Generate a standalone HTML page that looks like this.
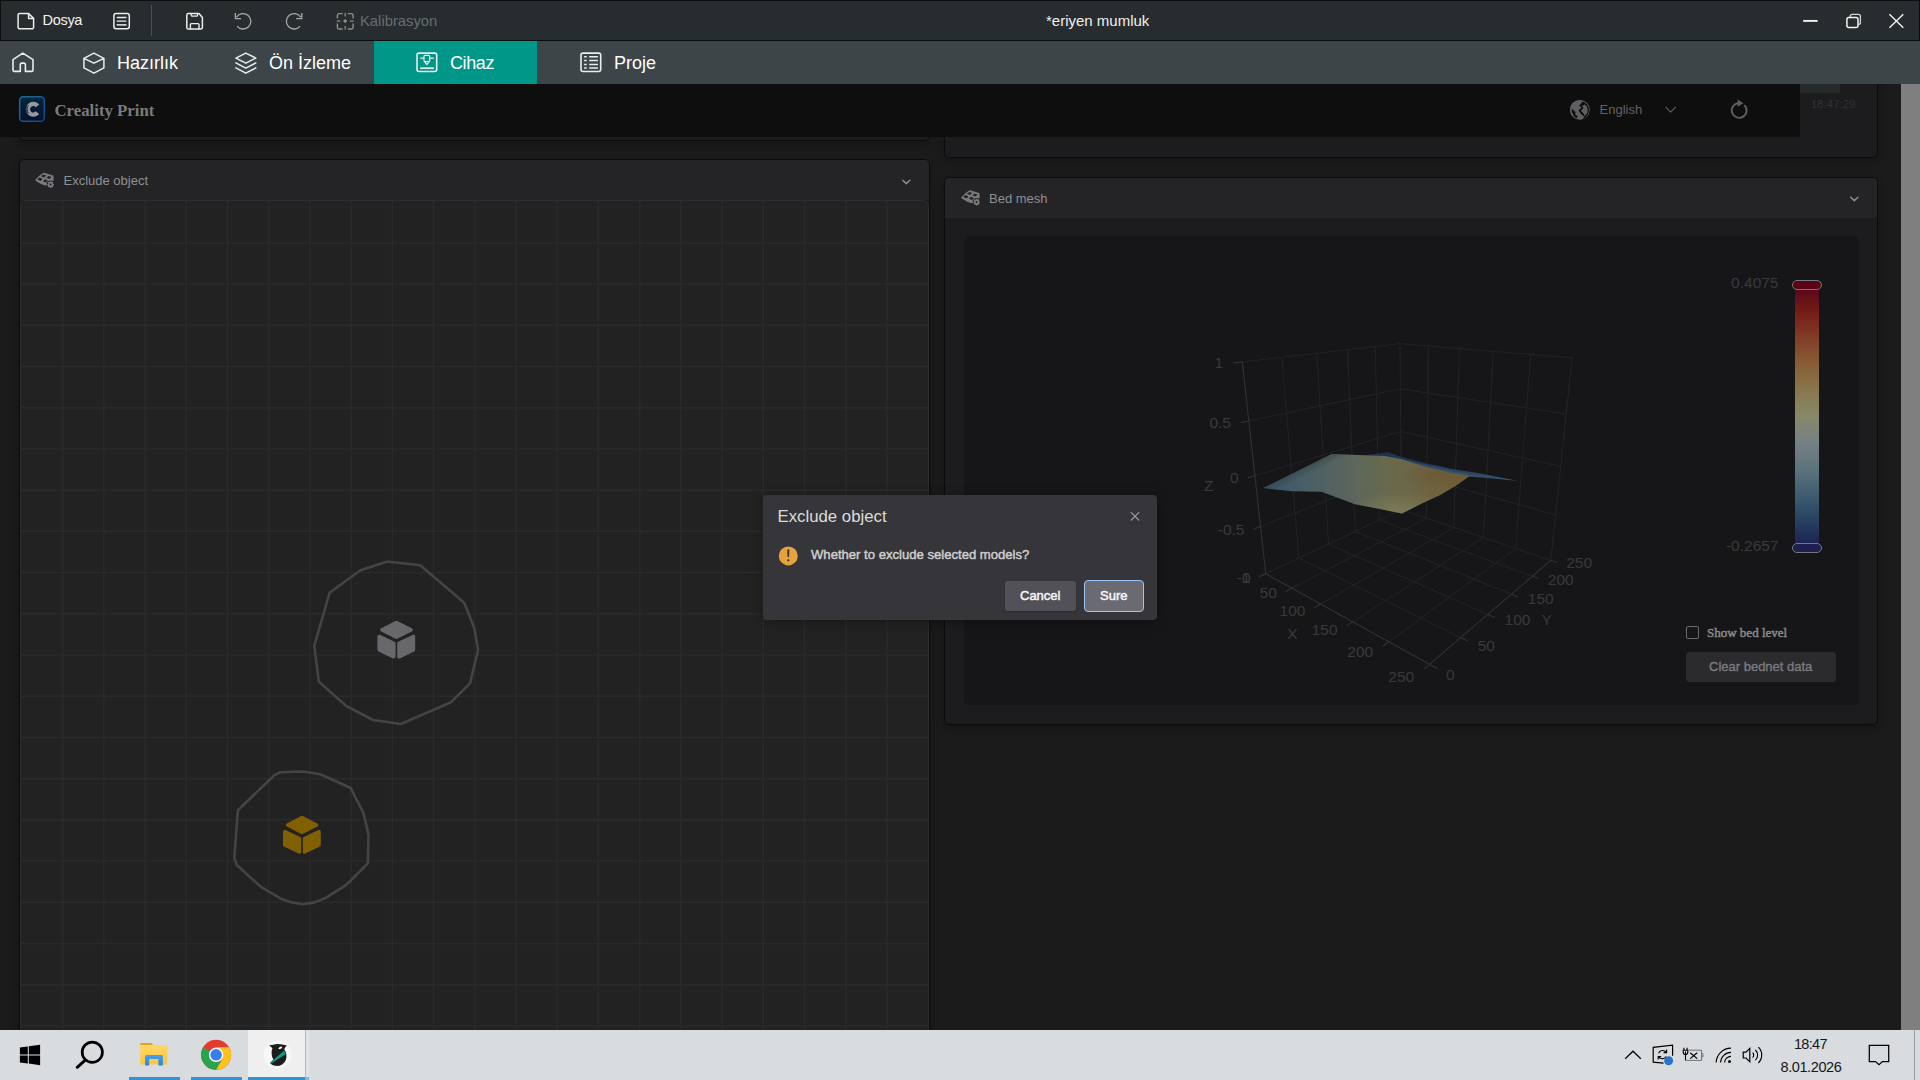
<!DOCTYPE html>
<html lang="tr">
<head>
<meta charset="utf-8">
<title>*eriyen mumluk</title>
<style>
*{box-sizing:border-box;margin:0;padding:0}
html,body{width:1920px;height:1080px;overflow:hidden;background:#1b1b1b}
body{position:relative;font-family:"Liberation Sans",sans-serif;color:#fff}
.abs{position:absolute}
.t{position:absolute;white-space:nowrap;line-height:1}
/* window chrome */
#titlebar{left:0;top:0;width:1920px;height:41px;background:#272d2f;border-top:1px solid #0d1011;border-left:1px solid #0d1011;border-right:1px solid #0b0d0e;border-bottom:1px solid #0b0d0e}
#tabbar{left:0;top:41px;width:1920px;height:43px;background:#3d4548}
#tabsel{left:374px;top:41px;width:163px;height:43px;background:#009688}
/* web content */
#web{left:0;top:84px;width:1901px;height:946px;background:#1b1b1b;overflow:hidden}
#scroll{left:1901px;top:84px;width:19px;height:946px;background:#7f7f80}
#hdr{left:0;top:0;width:1800px;height:53px;background:#0e0e0e}
.panel{position:absolute;background:#1c1c1e;border:1px solid #0c0c0d;border-radius:5px;box-shadow:0 3px 8px rgba(0,0,0,.28)}
.phead{position:absolute;left:0;top:0;right:0;height:40px;background:#242426;border-radius:4px 4px 0 0}
/* taskbar */
#taskbar{left:0;top:1030px;width:1920px;height:50px;background:#d8dcdf}
</style>
</head>
<body>
<div id="titlebar" class="abs"></div>
<div id="tabbar" class="abs"></div>
<div id="tabsel" class="abs"></div>
<!-- title bar text -->
<span class="t" style="left:42.5px;top:13px;font-size:14.5px;letter-spacing:-.3px;color:#f2f2f2">Dosya</span>
<span class="t" style="left:360px;top:13.6px;font-size:14.8px;color:#666d71">Kalibrasyon</span>
<span class="t" style="left:1046px;top:13px;font-size:15px;color:#f0f0f0">*eriyen mumluk</span>
<div class="abs" style="left:151px;top:5px;width:1px;height:31px;background:#4a5053"></div>
<!-- tab text -->
<span class="t" style="left:117px;top:54px;font-size:18px;color:#fff">Hazırlık</span>
<span class="t" style="left:269px;top:54px;font-size:18px;color:#fff">Ön İzleme</span>
<span class="t" style="left:450px;top:54px;font-size:18px;letter-spacing:-.4px;color:#fff">Cihaz</span>
<span class="t" style="left:614px;top:54px;font-size:18px;color:#fff">Proje</span>
<div id="web" class="abs">
  <!-- previous (scrolled) panels -->
  <div class="panel" style="left:19px;top:-30px;width:911px;height:87px"></div>
  <div class="panel" style="left:944px;top:-30px;width:934px;height:104px"></div>
  <div class="abs" style="left:1800px;top:0;width:40px;height:9px;background:#272a2a"></div>
  <span class="t" style="left:1811px;top:15px;font-size:11.4px;color:#313133">18:47:29</span>
  <div id="hdr" class="abs"></div>
  <span class="t" style="left:54.5px;top:19px;font-family:'Liberation Serif',serif;font-weight:bold;font-size:16.8px;color:#7b7b7b">Creality Print</span>
  <span class="t" style="left:1599.5px;top:19px;font-size:13px;color:#626266">English</span>

  <!-- Exclude object panel -->
  <div class="panel" style="left:19px;top:75px;width:911px;height:900px;border-radius:5px 5px 0 0">
    <div class="phead"></div>
    <span class="t" style="left:43.5px;top:14px;font-size:13px;color:#8f8f91">Exclude object</span>
    <svg class="abs" id="grid" style="left:0px;top:40px;background:#222223;border-radius:6px 6px 0 0;border:1px solid #2d2d2f;border-bottom:0" width="909" height="831" viewBox="21 201 907 830"><g stroke="#2a2a2d" stroke-width="1.5"><path d="M62.60,200V1040"/><path d="M103.82,200V1040"/><path d="M145.04,200V1040"/><path d="M186.26,200V1040"/><path d="M227.48,200V1040"/><path d="M268.70,200V1040"/><path d="M309.92,200V1040"/><path d="M351.14,200V1040"/><path d="M392.36,200V1040"/><path d="M433.58,200V1040"/><path d="M474.80,200V1040"/><path d="M516.02,200V1040"/><path d="M557.24,200V1040"/><path d="M598.46,200V1040"/><path d="M639.68,200V1040"/><path d="M680.90,200V1040"/><path d="M722.12,200V1040"/><path d="M763.34,200V1040"/><path d="M804.56,200V1040"/><path d="M845.78,200V1040"/><path d="M887.00,200V1040"/><path d="M20,242.90H930"/><path d="M20,284.11H930"/><path d="M20,325.32H930"/><path d="M20,366.53H930"/><path d="M20,407.74H930"/><path d="M20,448.95H930"/><path d="M20,490.16H930"/><path d="M20,531.37H930"/><path d="M20,572.58H930"/><path d="M20,613.79H930"/><path d="M20,655.00H930"/><path d="M20,696.21H930"/><path d="M20,737.42H930"/><path d="M20,778.63H930"/><path d="M20,819.84H930"/><path d="M20,861.05H930"/><path d="M20,902.26H930"/><path d="M20,943.47H930"/><path d="M20,984.68H930"/><path d="M20,1025.89H930"/></g></svg>
  </div>

  <!-- Bed mesh panel -->
  <div class="panel" style="left:944px;top:93px;width:934px;height:548px">
    <div class="phead"></div>
    <span class="t" style="left:44px;top:14px;font-size:13px;color:#8f8f91">Bed mesh</span>
    <div class="abs" style="left:19px;top:58px;width:895px;height:469px;background:#161618;border-radius:6px"></div>
    <div class="abs" style="left:741px;top:474px;width:150px;height:30px;background:#2b2b2d;border-radius:4px"></div>
    <span class="t" style="left:764px;top:482px;font-size:13px;color:#7c7c7e;-webkit-text-stroke:.35px #7c7c7e">Clear bednet data</span>
        <span class="t" style="left:762px;top:448px;font-family:'Liberation Serif',serif;font-size:13px;color:#8a8a8a;-webkit-text-stroke:.45px #8a8a8a">Show bed level</span>
    <div class="abs" style="left:741px;top:448px;width:13px;height:13px;border:1px solid #6a6a6a;border-radius:2px"></div>
  </div>
</div>
<div id="scroll" class="abs"></div>
<svg class="abs" id="plot" style="left:964px;top:236px" width="896" height="469" viewBox="964 236 896 469">
<defs>
<linearGradient id="cb" x1="0" y1="0" x2="0" y2="1">
<stop offset="0.0" stop-color="#590317"/><stop offset="0.1" stop-color="#731c17"/><stop offset="0.2" stop-color="#823c26"/><stop offset="0.3" stop-color="#875d35"/><stop offset="0.4" stop-color="#87774e"/><stop offset="0.5" stop-color="#888866"/><stop offset="0.6" stop-color="#778184"/><stop offset="0.7" stop-color="#5c747c"/><stop offset="0.8" stop-color="#3f5d70"/><stop offset="0.9" stop-color="#274061"/><stop offset="1.0" stop-color="#1c1f50"/>
</linearGradient>
<linearGradient id="sf" gradientUnits="userSpaceOnUse" x1="1263" y1="488" x2="1472" y2="470">
<stop offset="0" stop-color="#36546a"/><stop offset=".15" stop-color="#445c68"/><stop offset=".3" stop-color="#516262"/><stop offset=".45" stop-color="#5e665b"/><stop offset=".6" stop-color="#68694d"/><stop offset=".8" stop-color="#6e6440"/><stop offset="1" stop-color="#705d34"/>
</linearGradient>
<radialGradient id="sf2" gradientUnits="userSpaceOnUse" cx="1398" cy="512" r="48" gradientTransform="translate(1398 512) scale(1 .45) translate(-1398 -512)">
<stop offset="0" stop-color="#837f5a" stop-opacity=".75"/><stop offset="1" stop-color="#837f5a" stop-opacity="0"/>
</radialGradient>
<radialGradient id="sf3" gradientUnits="userSpaceOnUse" cx="1442" cy="474" r="40" gradientTransform="translate(1442 474) scale(1 .4) translate(-1442 -474)">
<stop offset="0" stop-color="#69532f" stop-opacity=".55"/><stop offset="1" stop-color="#69532f" stop-opacity="0"/>
</radialGradient>
<linearGradient id="sf4" gradientUnits="userSpaceOnUse" x1="1300" y1="470" x2="1303.5" y2="477.2">
<stop offset="0" stop-color="#33413f" stop-opacity=".5"/><stop offset="1" stop-color="#33413f" stop-opacity="0"/>
</linearGradient>
<linearGradient id="bl" gradientUnits="userSpaceOnUse" x1="1387" y1="452" x2="1517" y2="480">
<stop offset="0" stop-color="#1c3350"/><stop offset=".5" stop-color="#233c5a"/><stop offset="1" stop-color="#3a5a74"/>
</linearGradient>
<linearGradient id="bl2" gradientUnits="userSpaceOnUse" x1="1440" y1="466.4" x2="1438.7" y2="472.6">
<stop offset="0" stop-color="#2c4a6b" stop-opacity="0"/><stop offset=".3" stop-color="#3f5a70" stop-opacity=".45"/><stop offset="1" stop-color="#66695f" stop-opacity=".95"/>
</linearGradient>
<filter id="sb" x="-5%" y="-5%" width="110%" height="110%"><feGaussianBlur stdDeviation=".5"/></filter>
</defs>
<style>.g{stroke:#232326;stroke-width:1}.ax{stroke:#323235;stroke-width:1.1}.lb{font-family:"Liberation Sans","DejaVu Sans",sans-serif;font-size:15.5px;fill:#39393c}</style>
<line class="g" x1="1291.9" y1="588.1" x2="1426.5" y2="518.3"/>
<line class="g" x1="1298.9" y1="558.1" x2="1460.6" y2="637.6"/>
<line class="g" x1="1320.7" y1="604.1" x2="1453.8" y2="527.5"/>
<line class="g" x1="1328.5" y1="544.1" x2="1487.7" y2="614.4"/>
<line class="g" x1="1352.8" y1="621.9" x2="1483.4" y2="537.5"/>
<line class="g" x1="1355.2" y1="531.5" x2="1511.4" y2="594.2"/>
<line class="g" x1="1388.8" y1="641.8" x2="1515.6" y2="548.5"/>
<line class="g" x1="1379.3" y1="520.1" x2="1532.3" y2="576.3"/>
<line class="g" x1="1298.9" y1="558.1" x2="1281.8" y2="357.4"/>
<line class="g" x1="1328.5" y1="544.1" x2="1316.7" y2="353.3"/>
<line class="g" x1="1355.2" y1="531.5" x2="1347.6" y2="349.8"/>
<line class="g" x1="1379.3" y1="520.1" x2="1375.2" y2="346.6"/>
<line class="g" x1="1260.6" y1="526.5" x2="1401.0" y2="471.7"/>
<line class="g" x1="1254.9" y1="475.7" x2="1400.7" y2="431.4"/>
<line class="g" x1="1248.9" y1="421.0" x2="1400.4" y2="388.8"/>
<line class="g" x1="1426.5" y1="518.3" x2="1428.4" y2="346.0"/>
<line class="g" x1="1453.8" y1="527.5" x2="1459.4" y2="348.6"/>
<line class="g" x1="1483.4" y1="537.5" x2="1493.3" y2="351.3"/>
<line class="g" x1="1515.6" y1="548.5" x2="1530.7" y2="354.4"/>
<line class="g" x1="1401.0" y1="471.7" x2="1555.6" y2="514.9"/>
<line class="g" x1="1400.7" y1="431.4" x2="1560.7" y2="466.3"/>
<line class="g" x1="1400.4" y1="388.8" x2="1566.2" y2="414.0"/>
<line class="g" x1="1242.3" y1="361.9" x2="1400.0" y2="343.7"/>
<line class="g" x1="1400.0" y1="343.7" x2="1572.1" y2="357.8"/>
<line class="g" x1="1401.3" y1="509.7" x2="1400.0" y2="343.7"/>
<line class="g" x1="1550.8" y1="560.4" x2="1572.1" y2="357.8"/>
<line class="g" x1="1265.8" y1="573.7" x2="1401.3" y2="509.7"/>
<line class="g" x1="1401.3" y1="509.7" x2="1550.8" y2="560.4"/>
<line class="ax" x1="1265.8" y1="573.7" x2="1429.4" y2="664.3"/>
<line class="ax" x1="1429.4" y1="664.3" x2="1550.8" y2="560.4"/>
<line class="ax" x1="1265.8" y1="573.7" x2="1242.3" y2="361.9"/>
<line class="ax" x1="1265.8" y1="573.7" x2="1259.7" y2="576.6"/>
<line class="ax" x1="1429.4" y1="664.3" x2="1437.1" y2="668.6"/>
<line class="ax" x1="1291.9" y1="588.1" x2="1285.7" y2="591.4"/>
<line class="ax" x1="1460.6" y1="637.6" x2="1468.1" y2="641.3"/>
<line class="ax" x1="1320.7" y1="604.1" x2="1314.5" y2="607.7"/>
<line class="ax" x1="1487.7" y1="614.4" x2="1494.9" y2="617.6"/>
<line class="ax" x1="1352.8" y1="621.9" x2="1346.6" y2="625.9"/>
<line class="ax" x1="1511.4" y1="594.2" x2="1518.3" y2="597.0"/>
<line class="ax" x1="1388.8" y1="641.8" x2="1382.7" y2="646.3"/>
<line class="ax" x1="1532.3" y1="576.3" x2="1539.0" y2="578.8"/>
<line class="ax" x1="1429.4" y1="664.3" x2="1423.5" y2="669.4"/>
<line class="ax" x1="1550.8" y1="560.4" x2="1557.3" y2="562.6"/>
<line class="ax" x1="1265.8" y1="573.7" x2="1259.0" y2="576.9"/>
<line class="ax" x1="1260.6" y1="526.5" x2="1253.5" y2="529.3"/>
<line class="ax" x1="1254.9" y1="475.7" x2="1247.5" y2="478.0"/>
<line class="ax" x1="1248.9" y1="421.0" x2="1241.0" y2="422.7"/>
<line class="ax" x1="1242.3" y1="361.9" x2="1234.1" y2="362.9"/>
<g filter="url(#sb)">
<polygon points="1363.0,455.4 1387.7,452.3 1401.9,457.0 1426.7,463.6 1452.9,469.1 1482.1,473.8 1517.1,480.7 1469.7,476.6 1452.9,474.2 1426.7,468.2 1401.9,460.2 1385.0,457.1" fill="url(#bl)" />
<polygon points="1392.0,454.0 1401.9,457.0 1426.7,463.6 1452.9,469.1 1482.1,473.8 1505.0,478.3 1469.7,476.6 1452.9,474.2 1426.7,468.6 1401.9,461.2 1392.0,458.6" fill="url(#bl2)" />
<polygon points="1263.1,488.1 1331.7,454.1 1365.2,455.3 1385.0,456.1 1401.9,459.2 1426.7,467.2 1452.9,473.4 1469.7,476.0 1455.9,485.8 1439.8,495.3 1420.8,504.1 1401.9,513.6 1381.3,509.3 1355.0,504.2 1321.5,491.8 1292.3,491.3" fill="url(#sf)" />
<polygon points="1263.1,488.1 1331.7,454.1 1365.2,455.3 1385.0,456.1 1401.9,459.2 1426.7,467.2 1452.9,473.4 1469.7,476.0 1455.9,485.8 1439.8,495.3 1420.8,504.1 1401.9,513.6 1381.3,509.3 1355.0,504.2 1321.5,491.8 1292.3,491.3" fill="url(#sf2)" />
<polygon points="1263.1,488.1 1331.7,454.1 1365.2,455.3 1385.0,456.1 1401.9,459.2 1426.7,467.2 1452.9,473.4 1469.7,476.0 1455.9,485.8 1439.8,495.3 1420.8,504.1 1401.9,513.6 1381.3,509.3 1355.0,504.2 1321.5,491.8 1292.3,491.3" fill="url(#sf3)" />
<polygon points="1263.1,488.1 1331.7,454.1 1365.2,455.3 1385.0,456.1 1401.9,459.2 1426.7,467.2 1452.9,473.4 1469.7,476.0 1455.9,485.8 1439.8,495.3 1420.8,504.1 1401.9,513.6 1381.3,509.3 1355.0,504.2 1321.5,491.8 1292.3,491.3" fill="url(#sf4)" />
</g>
<text class="lb" x="1268.3" y="597.9" text-anchor="middle">50</text>
<text class="lb" x="1292.5" y="615.6" text-anchor="middle">100</text>
<text class="lb" x="1324.7" y="634.8" text-anchor="middle">150</text>
<text class="lb" x="1360.3" y="656.8" text-anchor="middle">200</text>
<text class="lb" x="1401.3" y="681.8" text-anchor="middle">250</text>
<text class="lb" x="1292.5" y="639.3" text-anchor="middle">X</text>
<text class="lb" x="1450.3" y="679.8" text-anchor="middle">0</text>
<text class="lb" x="1486.3" y="650.6" text-anchor="middle">50</text>
<text class="lb" x="1517.5" y="625.4" text-anchor="middle">100</text>
<text class="lb" x="1540.8" y="603.8" text-anchor="middle">150</text>
<text class="lb" x="1560.8" y="584.8" text-anchor="middle">200</text>
<text class="lb" x="1579.2" y="567.6" text-anchor="middle">250</text>
<text class="lb" x="1546.7" y="625.4" text-anchor="middle">Y</text>
<text class="lb" x="1208.7" y="491.3" text-anchor="middle">Z</text>
<text class="lb" x="1223.0" y="367.9" text-anchor="end">1</text>
<text class="lb" x="1231.0" y="427.9" text-anchor="end">0.5</text>
<text class="lb" x="1238.5" y="483.4" text-anchor="end">0</text>
<text class="lb" x="1244.5" y="535.1" text-anchor="end">-0.5</text>
<text class="lb" x="1250.5" y="582.6" text-anchor="end">-1</text>
<text class="lb" x="1250.5" y="582.6" text-anchor="end">0</text>
<rect x="1795" y="285" width="24" height="262" fill="url(#cb)"/>
<rect x="1792.5" y="280.5" width="29" height="9" rx="4.5" fill="#590317" stroke="#77777a" stroke-width="1"/>
<rect x="1792.5" y="543.5" width="29" height="9" rx="4.5" fill="#1c1f50" stroke="#77777a" stroke-width="1"/>
<text class="lb" x="1778.5" y="288.4" text-anchor="end">0.4075</text>
<text class="lb" x="1778.5" y="550.9" text-anchor="end">-0.2657</text>
</svg>
<svg class="abs" id="icons" style="left:0;top:0" width="1920" height="1080" viewBox="0 0 1920 1080" fill="none" stroke-linecap="round" stroke-linejoin="round">
<!-- title bar icons -->
<g stroke="#ececec" stroke-width="1.5">
  <path d="M19.6,13.6 H28.6 L33.6,18.4 V27.3 a1.5,1.5 0 0 1 -1.5,1.5 H19.6 a1.5,1.5 0 0 1 -1.5,-1.5 V15.1 a1.5,1.5 0 0 1 1.5,-1.5 Z"/>
  <path d="M28.6,13.8 V18.4 H33.4"/>
  <rect x="113.9" y="13.6" width="15.4" height="15.2" rx="2.2"/>
  <path d="M117.3,17.5 H125.9 M117.3,21.1 H125.9" stroke-width="1.4"/>
  <path d="M117.3,24.8 H125.9" stroke-width="1.7" stroke="#cfcfcf"/>
  <path d="M188.4,13.6 H199 L202.4,17.4 V27.4 a1.6,1.6 0 0 1 -1.6,1.6 H188.4 a1.6,1.6 0 0 1 -1.6,-1.6 V15.2 a1.6,1.6 0 0 1 1.6,-1.6 Z"/>
  <path d="M191.2,13.8 V15 a1.2,1.2 0 0 0 1.2,1.2 H196.4 a1.2,1.2 0 0 0 1.2,-1.2 V13.8" stroke-width="1.3"/>
  <path d="M190.4,28.8 V24.6 a1,1 0 0 1 1,-1 H198 a1,1 0 0 1 1,1 V28.8" stroke-width="1.4"/>
</g>
<g stroke="#a9a9a9" stroke-width="1.3" stroke-linecap="butt" stroke-linejoin="miter">
  <path d="M237.1,26.1 A7.7,7.7 0 1 0 236.6,17.2"/>
  <path d="M235.4,13 V18.7 H241"/>
  <path d="M300.1,26.1 A7.7,7.7 0 1 1 300.6,17.2"/>
  <path d="M301.8,13 V18.7 H296.2"/>
</g>
<g stroke="#8d8d8d" stroke-width="1.4" stroke-linecap="butt">
  <path d="M337.4,18.6 V15.4 a1.8,1.8 0 0 1 1.8,-1.8 H342.6 M347.8,13.6 H351.3 a1.8,1.8 0 0 1 1.8,1.8 V18.6 M353.1,23.6 V27.2 a1.8,1.8 0 0 1 -1.8,1.8 H347.8 M342.6,29 H339.2 a1.8,1.8 0 0 1 -1.8,-1.8 V23.6"/>
  <path d="M345.2,13 V16.6 M345.2,26 V29.6 M336.8,21.1 H340.4 M350,21.1 H353.6" stroke-width="1.3"/>
  <path d="M345.2,19.3 L347,21.1 L345.2,22.9 L343.4,21.1 Z" fill="#8d8d8d" stroke-width=".6"/>
</g>
<!-- window controls -->
<g stroke="#f2f2f2" stroke-width="1.5" stroke-linecap="butt">
  <path d="M1803.2,20.9 H1817.6" stroke-width="1.9"/>
  <path d="M1850.2,17.2 V16.4 a2,2 0 0 1 2,-2 H1858.4 a2,2 0 0 1 2,2 V22.4 a2,2 0 0 1 -2,2 H1858.3" stroke="#d0d4d4" stroke-width="1.3"/>
  <rect x="1846.9" y="17.5" width="11.1" height="9.9" rx="2"/>
  <path d="M1889.4,14.3 L1903.3,27.7 M1903.3,14.3 L1889.4,27.7" stroke-width="1.4"/>
</g>
<!-- tab icons -->
<g stroke="#ececec" stroke-width="1.6">
  <path d="M13,59.7 L22.8,53.1 L33,59.7 V70 a1.4,1.4 0 0 1 -1.4,1.4 H25.4 V64.6 a1.5,1.5 0 0 0 -1.5,-1.5 H21.8 a1.5,1.5 0 0 0 -1.5,1.5 V71.4 H14.4 a1.4,1.4 0 0 1 -1.4,-1.4 Z"/>
  <path d="M93.9,53.1 L103.9,58.3 V67.9 L93.9,73.2 L83.9,67.9 V58.3 Z M83.9,58.3 L93.9,63.2 L103.9,58.3" stroke-width="1.5"/>
  <path d="M245.8,53.1 L255.8,58.1 L245.8,63.2 L235.9,58.1 Z M235.9,62.9 L245.8,68.2 L255.8,62.9 M235.9,67.9 L245.8,73.2 L255.8,67.9" stroke-width="1.5"/>
  <rect x="417" y="53.1" width="19.7" height="18.4" rx="2"/>
  <path d="M420.1,58.1 H424 M429.6,58.1 H433.9" stroke-width="1.3" stroke-linecap="butt"/>
  <path d="M420.1,68.2 H433.9" stroke-width="1.7" stroke-linecap="butt"/>
  <path d="M425.2,55.3 H428.5 a1.2,1.2 0 0 1 1.2,1.2 V60.8 L426.85,64.6 L424,60.8 V56.5 a1.2,1.2 0 0 1 1.2,-1.2 Z M424.6,61.6 H429.1" stroke-width="1.2"/>
  <rect x="581" y="53.1" width="19.7" height="18.4" rx="2"/>
  <path d="M584.1,56.8 H586.7 M589.2,56.8 H597.9 M584.1,60.6 H586.7 M589.2,60.6 H597.9 M584.1,64.4 H586.7 M589.2,64.4 H597.9 M584.1,68.1 H586.7 M589.2,68.1 H597.9" stroke-width="1.5" stroke-linecap="butt"/>
</g>
</svg>
<svg class="abs" id="icons2" style="left:0;top:0" width="1920" height="1080" viewBox="0 0 1920 1080" fill="none" stroke-linecap="round" stroke-linejoin="round">
<defs>
<linearGradient id="lg1" x1="0" y1="0" x2="0" y2="1"><stop offset="0" stop-color="#05263f"/><stop offset="1" stop-color="#030f2a"/></linearGradient>
<linearGradient id="lg2" x1="0" y1="0" x2="1" y2="1"><stop offset="0" stop-color="#1d6e98"/><stop offset="1" stop-color="#0d4a8a"/></linearGradient>
</defs>
<!-- logo -->
<rect x="19.7" y="96.7" width="24.6" height="24.6" rx="3.6" fill="url(#lg1)" stroke="url(#lg2)" stroke-width="1.5"/>
<path d="M37.5,105.9 A5.4,5.4 0 1 0 37.5,112.7" stroke="#9699a2" stroke-width="4.3" stroke-linecap="butt"/>
<path d="M28.2,105.4 C26.8,108 26.8,111 28.6,113.4 M26.6,106.4 C26,108.6 26.2,111 27.2,112.8" stroke="#06203c" stroke-width=".8"/>
<!-- globe -->
<circle cx="1579.8" cy="109.8" r="9.3" fill="#5f5f63" stroke="#66666a" stroke-width="1.2"/>
<path d="M1582.6,101.5 L1579.2,105.8 L1581.6,107.6 L1578.4,110.6 L1581.4,114.4 L1584.4,116.6 L1582.6,119 C1586.4,117.8 1589,114.2 1589,109.8 C1589,106 1586.4,102.6 1582.6,101.5 Z" fill="#0e0e0e" stroke="none"/>
<path d="M1584.8,104.4 C1587,106 1588,108.6 1587.6,111 C1587.2,113.2 1586,115 1584.6,116 L1583.4,113.2 L1580.8,110.8 L1583.6,108 L1582,106 Z" fill="#5f5f63" stroke="none"/>
<path d="M1571.6,108.6 L1575.6,112.2 L1575.2,114.6 L1577.4,116 L1577,118.4 C1574,117 1571.6,113.6 1571.6,108.6 Z" fill="#0e0e0e" stroke="none"/>
<!-- chevron -->
<path d="M1665.9,107.2 L1670.7,112.2 L1675.5,107.2" stroke="#5a5a5e" stroke-width="1.2"/>
<!-- refresh -->
<path d="M1744.4,105.2 A7.4,7.4 0 1 1 1738.2,103.1" stroke="#606064" stroke-width="1.9" stroke-linecap="butt"/>
<path d="M1737.6,99.4 L1743.4,103.2 L1737.6,106.8 Z" fill="#606064"/>
<!-- panel icons -->
<g fill="#7c7c7f">
  <g id="bedic"><path stroke="#7c7c7f" stroke-width="1.3" stroke-linejoin="round" d="M36,180.2 C38,177.6 40.6,175.2 43.9,173.4 L52.9,176.1 L52.9,180.6 L47.4,185.3 C43.4,184.6 39.4,182.9 36,180.2 Z"/>
<path fill="#242426" stroke="none" d="M43.3,174.5 L40.9,176.3 L44.1,177.4 L46.3,175.5 Z M48.5,176.1 L46.4,178 L49.6,179 L51.5,177.1 Z M39.3,177.6 L37.3,179.5 L40.7,180.9 L42.6,178.8 Z M44.8,179.3 L42.9,181.3 L46.1,182.4 L47.9,180.4 Z"/>
<circle cx="50.6" cy="184.6" r="4" fill="#242426" stroke="none"/></g>
  <path id="cogic" fill-rule="evenodd" transform="translate(50.6 184.6) scale(.88) translate(-51.8 -185)" d="M51.2,181.2 L52.4,181.2 L52.8,182.4 L54,181.8 L54.9,182.7 L54.3,183.9 L55.5,184.4 L55.5,185.6 L54.3,186.1 L54.9,187.3 L54,188.2 L52.8,187.6 L52.4,188.8 L51.2,188.8 L50.8,187.6 L49.6,188.2 L48.7,187.3 L49.3,186.1 L48.1,185.6 L48.1,184.4 L49.3,183.9 L48.7,182.7 L49.6,181.8 L50.8,182.4 Z M51.8,183.8 A1.2,1.2 0 1 0 51.8,186.2 A1.2,1.2 0 1 0 51.8,183.8 Z"/>
  <use href="#bedic" x="926" y="17.5"/>
  <use href="#cogic" x="926" y="17.5"/>
</g>
<path d="M902.7,180.2 L906.3,183.6 L909.9,180.2" stroke="#8a8a8d" stroke-width="1.5"/>
<path d="M1850.7,197.2 L1854.3,200.6 L1857.9,197.2" stroke="#8a8a8d" stroke-width="1.5"/>
<!-- excluded objects -->
<g stroke="#444447" stroke-width="2.6" fill="none">
  <polygon points="387.2,561.5 420.2,565.3 464.2,602.8 474.4,628.3 478.1,650.1 470,683.4 451,702.2 400.8,724 373,720 346.5,706.2 318.8,681.6 314.3,645.7 329.6,592.8 360.1,570.5"/>
  <polygon points="280.3,772.2 303.2,771.5 320.4,774.3 350.6,788 363.5,813.1 368.5,834.6 367.8,863.3 346.3,884.8 326.2,897.7 314.7,902.4 303.2,904.2 291.7,902.4 280.3,898.4 260.2,886.3 236.5,864.7 234.3,857.6 237.9,810.2 274.5,775.1"/>
</g>
<g id="cube1" fill="#68686c" stroke="#68686c" stroke-width="3.6">
  <polygon points="396.4,622.5 411,629.8 396.4,637.2 382,629.8"/>
  <polygon points="379.2,636.5 393.8,643.4 393.8,656.8 379.2,649.8"/>
  <polygon points="399,643.4 413.4,636.5 413.4,649.8 399,656.8"/>
</g>
<g fill="#806000" stroke="#806000" stroke-width="3.6" transform="translate(-94.4 195.2)">
  <polygon points="396.4,622.5 411,629.8 396.4,637.2 382,629.8"/>
  <polygon points="379.2,636.5 393.8,643.4 393.8,656.8 379.2,649.8"/>
  <polygon points="399,643.4 413.4,636.5 413.4,649.8 399,656.8"/>
</g>
</svg>
<div class="abs" id="dlg" style="left:763px;top:495px;width:394px;height:125px;background:#363539;border-radius:4px;box-shadow:0 2px 12px rgba(0,0,0,.35)">
  <span class="t" style="left:14.5px;top:13.5px;font-size:16.8px;color:#dcdcdc">Exclude object</span>
  <span class="t" style="left:48px;top:53px;font-size:13.1px;color:#cfcfcf;-webkit-text-stroke:.45px #cfcfcf">Whether to exclude selected models?</span>
  <div class="abs" style="left:242px;top:86px;width:71px;height:30px;background:#525158;border-radius:3px;box-shadow:0 1px 2px rgba(0,0,0,.25)"></div>
  <span class="t" style="left:257px;top:93.5px;font-size:13px;color:#f4f4f4;-webkit-text-stroke:.5px #f4f4f4">Cancel</span>
  <div class="abs" style="left:321px;top:85px;width:60px;height:32px;background:#6a6a73;border-radius:4px;border:1px solid #9cc4f4"></div>
  <span class="t" style="left:337px;top:93.5px;font-size:13px;color:#f4f4f4;-webkit-text-stroke:.5px #f4f4f4">Sure</span>
  <svg class="abs" style="left:0;top:0" width="394" height="125" viewBox="763 495 394 125" fill="none">
    <circle cx="788.3" cy="555.9" r="9.5" fill="#e7a33b"/>
    <path d="M787.2,549.6 h2.2 l-.35,7.4 h-1.5 Z" fill="#363539"/>
    <circle cx="788.3" cy="560.3" r="1.15" fill="#363539"/>
    <path d="M1130.8,512.1 L1139.2,520.5 M1139.2,512.1 L1130.8,520.5" stroke="#9b9ba0" stroke-width="1.1"/>
  </svg>
</div>
<div id="taskbar" class="abs"></div>
<div class="abs" style="left:248px;top:1030px;width:57px;height:50px;background:#efefef"></div>
<div class="abs" style="left:304.5px;top:1030px;width:1px;height:50px;background:#b4b6b8"></div>
<div class="abs" style="left:305.5px;top:1030px;width:3.5px;height:50px;background:#e0e4e6"></div>
<div class="abs" style="left:129px;top:1077px;width:51px;height:3px;background:#2f93d6"></div>
<div class="abs" style="left:191px;top:1077px;width:51px;height:3px;background:#2f93d6"></div>
<div class="abs" style="left:248px;top:1077px;width:57px;height:3px;background:#2f93d6"></div>
<div class="abs" style="left:305px;top:1077px;width:4px;height:3px;background:#7fbbe6"></div>
<div class="abs" style="left:1914px;top:1030px;width:1px;height:50px;background:#9c9ea0"></div>
<span class="t" style="left:1794px;top:1037px;font-size:14.5px;letter-spacing:-.7px;color:#161616">18:47</span>
<span class="t" style="left:1780.5px;top:1060px;font-size:14.5px;letter-spacing:-.4px;color:#161616">8.01.2026</span>
<svg class="abs" style="left:0;top:1030px" width="1920" height="50" viewBox="0 1030 1920 50" fill="none">
<defs>
<linearGradient id="fy" x1="0" y1="0" x2="0" y2="1"><stop offset="0" stop-color="#ffd766"/><stop offset="1" stop-color="#fcc640"/></linearGradient>
<linearGradient id="fb" x1="0" y1="0" x2="0" y2="1"><stop offset="0" stop-color="#47a0e8"/><stop offset="1" stop-color="#2f86d4"/></linearGradient>
</defs>
<!-- windows logo -->
<g fill="#000">
<polygon points="19.9,1047.5 27.8,1046.4 27.8,1054.4 19.9,1054.4"/>
<polygon points="28.8,1046.3 40.1,1044.8 40.1,1054.4 28.8,1054.4"/>
<polygon points="19.9,1055.4 27.8,1055.4 27.8,1063.4 19.9,1062.4"/>
<polygon points="28.8,1055.4 40.1,1055.4 40.1,1065.2 28.8,1063.6"/>
</g>
<!-- search -->
<circle cx="92.3" cy="1052.2" r="10.1" stroke="#000" stroke-width="2.7"/>
<path d="M85.2,1060.2 L77.2,1067.3" stroke="#000" stroke-width="2.9" stroke-linecap="round"/>
<!-- explorer -->
<path d="M140.2,1044.3 a1.2,1.2 0 0 1 1.2,-1.2 H151 a1.5,1.5 0 0 1 1.2,.6 L153.2,1045 H140.2 Z" fill="#e3a212"/>
<path d="M140.2,1046 a1,1 0 0 1 1,-1 H166.3 a1,1 0 0 1 1,1 V1063.4 a1,1 0 0 1 -1,1 H141.2 a1,1 0 0 1 -1,-1 Z" fill="url(#fy)"/>
<path d="M145.1,1056.6 a1.5,1.5 0 0 1 1.5,-1.5 H161.4 a1.5,1.5 0 0 1 1.5,1.5 V1065.6 H158.4 V1059 H149.2 V1065.6 H145.1 Z" fill="url(#fb)"/>
<!-- chrome -->
<g>
<circle cx="216.1" cy="1054.8" r="15" fill="#e33b2e"/>
<path d="M216.1,1054.8 L203.1,1047.3 A15,15 0 0 0 216.1,1069.8 L222.6,1058.55 Z" fill="#2ba24c"/>
<path d="M216.1,1069.8 A15,15 0 0 0 229.1,1047.3 L216.1,1047.3 L222.6,1058.55 Z" fill="#fcc31e"/>
<path d="M203.1,1047.3 L209.6,1058.55 L216.1,1054.8 Z" fill="#2ba24c"/>
<circle cx="216.1" cy="1054.8" r="7.2" fill="#fff"/>
<circle cx="216.1" cy="1054.8" r="5.8" fill="#3b7ded"/>
</g>
<!-- creality print -->
<circle cx="277.5" cy="1054.8" r="14" fill="#f7f7f7"/>
<path d="M269,1045.2 C271.6,1045.6 273.6,1044.2 277.6,1044 C281.6,1043.9 283.6,1045 286.9,1045.6 C285.6,1047.2 284.6,1047.6 284.4,1049.4 C286.6,1052.6 287.2,1056.8 285.6,1060.4 C283.8,1064.4 279.6,1066.4 275.6,1065.8 C272.8,1065.4 270.8,1064.4 270.2,1063 L273.4,1059.6 C271.4,1056.2 271,1051.6 272.4,1048.4 C271.6,1047 270.2,1046.4 269,1045.2 Z" fill="#1d1d1d"/>
<polygon points="284.3,1050.4 285.6,1054.2 271.2,1063.4 270.2,1062.6" fill="#12988a"/>
<ellipse cx="280.3" cy="1047.9" rx="2" ry="1.05" transform="rotate(-28 280.3 1047.9)" fill="#fff"/>
<!-- tray -->
<g stroke="#000" stroke-width="1.2">
<path d="M1625.2,1058.8 L1633,1051.2 L1640.8,1058.8"/>
<path d="M1663.6,1063.2 L1653.2,1062.2 V1047.4 L1672.6,1045.1 V1055.8" stroke-width="1.2"/>
<path d="M1658.6,1053.4 C1659.4,1050.8 1662.6,1049.8 1665,1051.2 L1666.4,1052.4 M1666.6,1049.6 V1052.6 H1663.6 M1666,1056.4 C1665,1058.6 1662,1059.4 1659.8,1058 L1658.4,1056.8 M1658.2,1059.6 V1056.6 H1661.2" stroke-width="1.1"/>
<path d="M1685.5,1051.6 V1060.5 M1683.9,1047.8 V1050 M1687.1,1047.8 V1050" stroke-width="1.1"/>
<path d="M1683.2,1050.2 H1687.8 V1052.2 a2.3,2.3 0 0 1 -4.6,0 Z" stroke-width="1.1"/>
<path d="M1688.4,1050.2 H1701.6 V1060.4 H1686.2" stroke="#666" stroke-width=".9"/>
<path d="M1702.2,1053.6 H1703 V1057 H1702.2" stroke="#666" stroke-width=".9"/>
<path d="M1690.2,1052.8 L1697.2,1058.6 M1697.2,1052.8 L1690.2,1058.6" stroke-width="1.2"/>
<path d="M1716.2,1062.6 A14.8,14.8 0 0 1 1731,1048.2 M1720.6,1062.6 A10.4,10.4 0 0 1 1731,1052.4 M1724.6,1062.6 A6.4,6.4 0 0 1 1731,1056.4" stroke-width="1.15"/>
<path d="M1743.2,1052.2 H1746 L1749.8,1048.4 V1061.8 L1746,1058 H1743.2 Z" stroke-width="1.2"/>
<path d="M1752.6,1052.6 A3.4,3.4 0 0 1 1752.6,1057.6 M1755.4,1050 A7,7 0 0 1 1755.4,1060.2 M1758.4,1047.2 A11,11 0 0 1 1758.4,1063" stroke-width="1.15"/>
<path d="M1869.3,1045.3 H1888.7 V1061.5 H1882.4 L1879,1064.6 L1875.6,1061.5 H1869.3 Z" stroke-width="1.25"/>
</g>
<circle cx="1729.5" cy="1061.5" r="1.5" fill="#000"/>
<circle cx="1668.6" cy="1060.7" r="4.5" fill="#2b73c4"/>
</svg>
</body>
</html>
